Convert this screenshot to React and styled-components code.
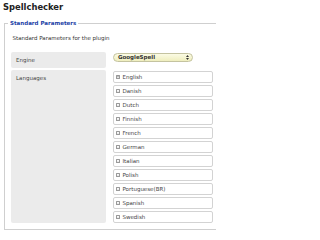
import styled, { createGlobalStyle } from "styled-components";

const GlobalStyle = createGlobalStyle`
  html, body {
    margin: 0;
    padding: 0;
    background: #fff;
    overflow: hidden;
  }
  body {
    font-family: "DejaVu Sans", Verdana, sans-serif;
  }
`

const Page = styled.div`
  width: 216px;
  height: 233px;
`

const Title = styled.h1`
  margin: 0;
  padding: 2px 0 0 3px;
  font-size: 8.4px;
  line-height: 10px;
  font-weight: 700;
  color: #222;
`

// the right edge of the fieldset is cut off by the window in the shot
const Params = styled.fieldset`
  box-sizing: border-box;
  width: 212px;
  margin: 7px 0 0 4px;
  padding: 7px 0 6px 6px;
  border: 1px solid #cfcfcf;
  border-right: none;
  min-width: 0;
`

const Legend = styled.legend`
  margin-left: -3px;
  padding: 0 2px;
  font-size: 5.5px;
  line-height: 8px;
  font-weight: 700;
  color: #1d3fa6;
`

const Description = styled.div`
  padding-left: 1.5px;
  margin-bottom: 10px;
  font-size: 5.5px;
  line-height: 8px;
  color: #333;
`

const Grid = styled.div`
  display: grid;
  grid-template-columns: 95px 100px;
  column-gap: 6.5px;
  row-gap: 2px;
  align-items: stretch;
`

const Label = styled.div`
  background: #ebebeb;
  border-radius: 2px;
  padding: 4px 5px;
  font-size: 5.5px;
  line-height: 8px;
  color: #444;
`

const Value = styled.div`
  padding-top: ${p => p.$top || 0}px;
`

const Select = styled.div`
  box-sizing: border-box;
  width: 80px;
  height: 8.5px;
  display: flex;
  align-items: center;
  justify-content: space-between;
  padding: 0 3px 0 4.5px;
  border: 1px solid #c4c3a0;
  border-radius: 4.5px;
  background: linear-gradient(#fbfbe4, #efeebe);
  font-size: 5.5px;
  font-weight: 700;
  color: #333;
`

const List = styled.div`
  display: flex;
  flex-direction: column;
  gap: 2px;
  padding-top: 0.5px;
`

const Row = styled.div`
  box-sizing: border-box;
  height: 12px;
  display: flex;
  align-items: center;
  gap: 2.5px;
  padding-left: 2.5px;
  border: 1px solid #d3d3d3;
  border-radius: 2px;
  background: #fff;
  font-size: 5.5px;
  color: #444;
`

const Box = styled.span`
  box-sizing: border-box;
  width: 4px;
  height: 4px;
  border: 0.6px solid #9a9a9a;
  border-radius: 0.5px;
  background: linear-gradient(#fff, #e6e6e6);
  display: flex;
  align-items: center;
  justify-content: center;
`

const languages = ["English", "Danish", "Dutch", "Finnish", "French", "German", "Italian", "Polish", "Portuguese(BR)", "Spanish", "Swedish"]

const Arrows = () => (
  <svg width="3" height="5" viewBox="0 0 3 5">
    <path d="M1.5 0 L3 2 L0 2 Z M0 3 L3 3 L1.5 5 Z" fill="#333" />
  </svg>
)

const Check = ({checked}) => (
  <Box>
    {checked && <svg width="3" height="3" viewBox="0 0 3 3">
      <path d="M0.4 0.4 L2.6 2.6 M2.6 0.4 L0.4 2.6" stroke="#555" strokeWidth="0.6" />
    </svg>}
  </Box>
)

export default function App() {
  return (
    <Page>
      <GlobalStyle />
      <Title>Spellchecker</Title>
      <Params>
        <Legend>Standard Parameters</Legend>
        <Description>Standard Parameters for the plugin</Description>
        <Grid>
          <Label>Engine</Label>
          <Value $top={1}>
            <Select>GoogleSpell<Arrows /></Select>
          </Value>
          <Label>Languages</Label>
          <Value>
            <List>
              {languages.map((l, i) => (
                <Row key={l}><Check checked={i === 0} />{l}</Row>
              ))}
            </List>
          </Value>
        </Grid>
      </Params>
    </Page>
  )
}
